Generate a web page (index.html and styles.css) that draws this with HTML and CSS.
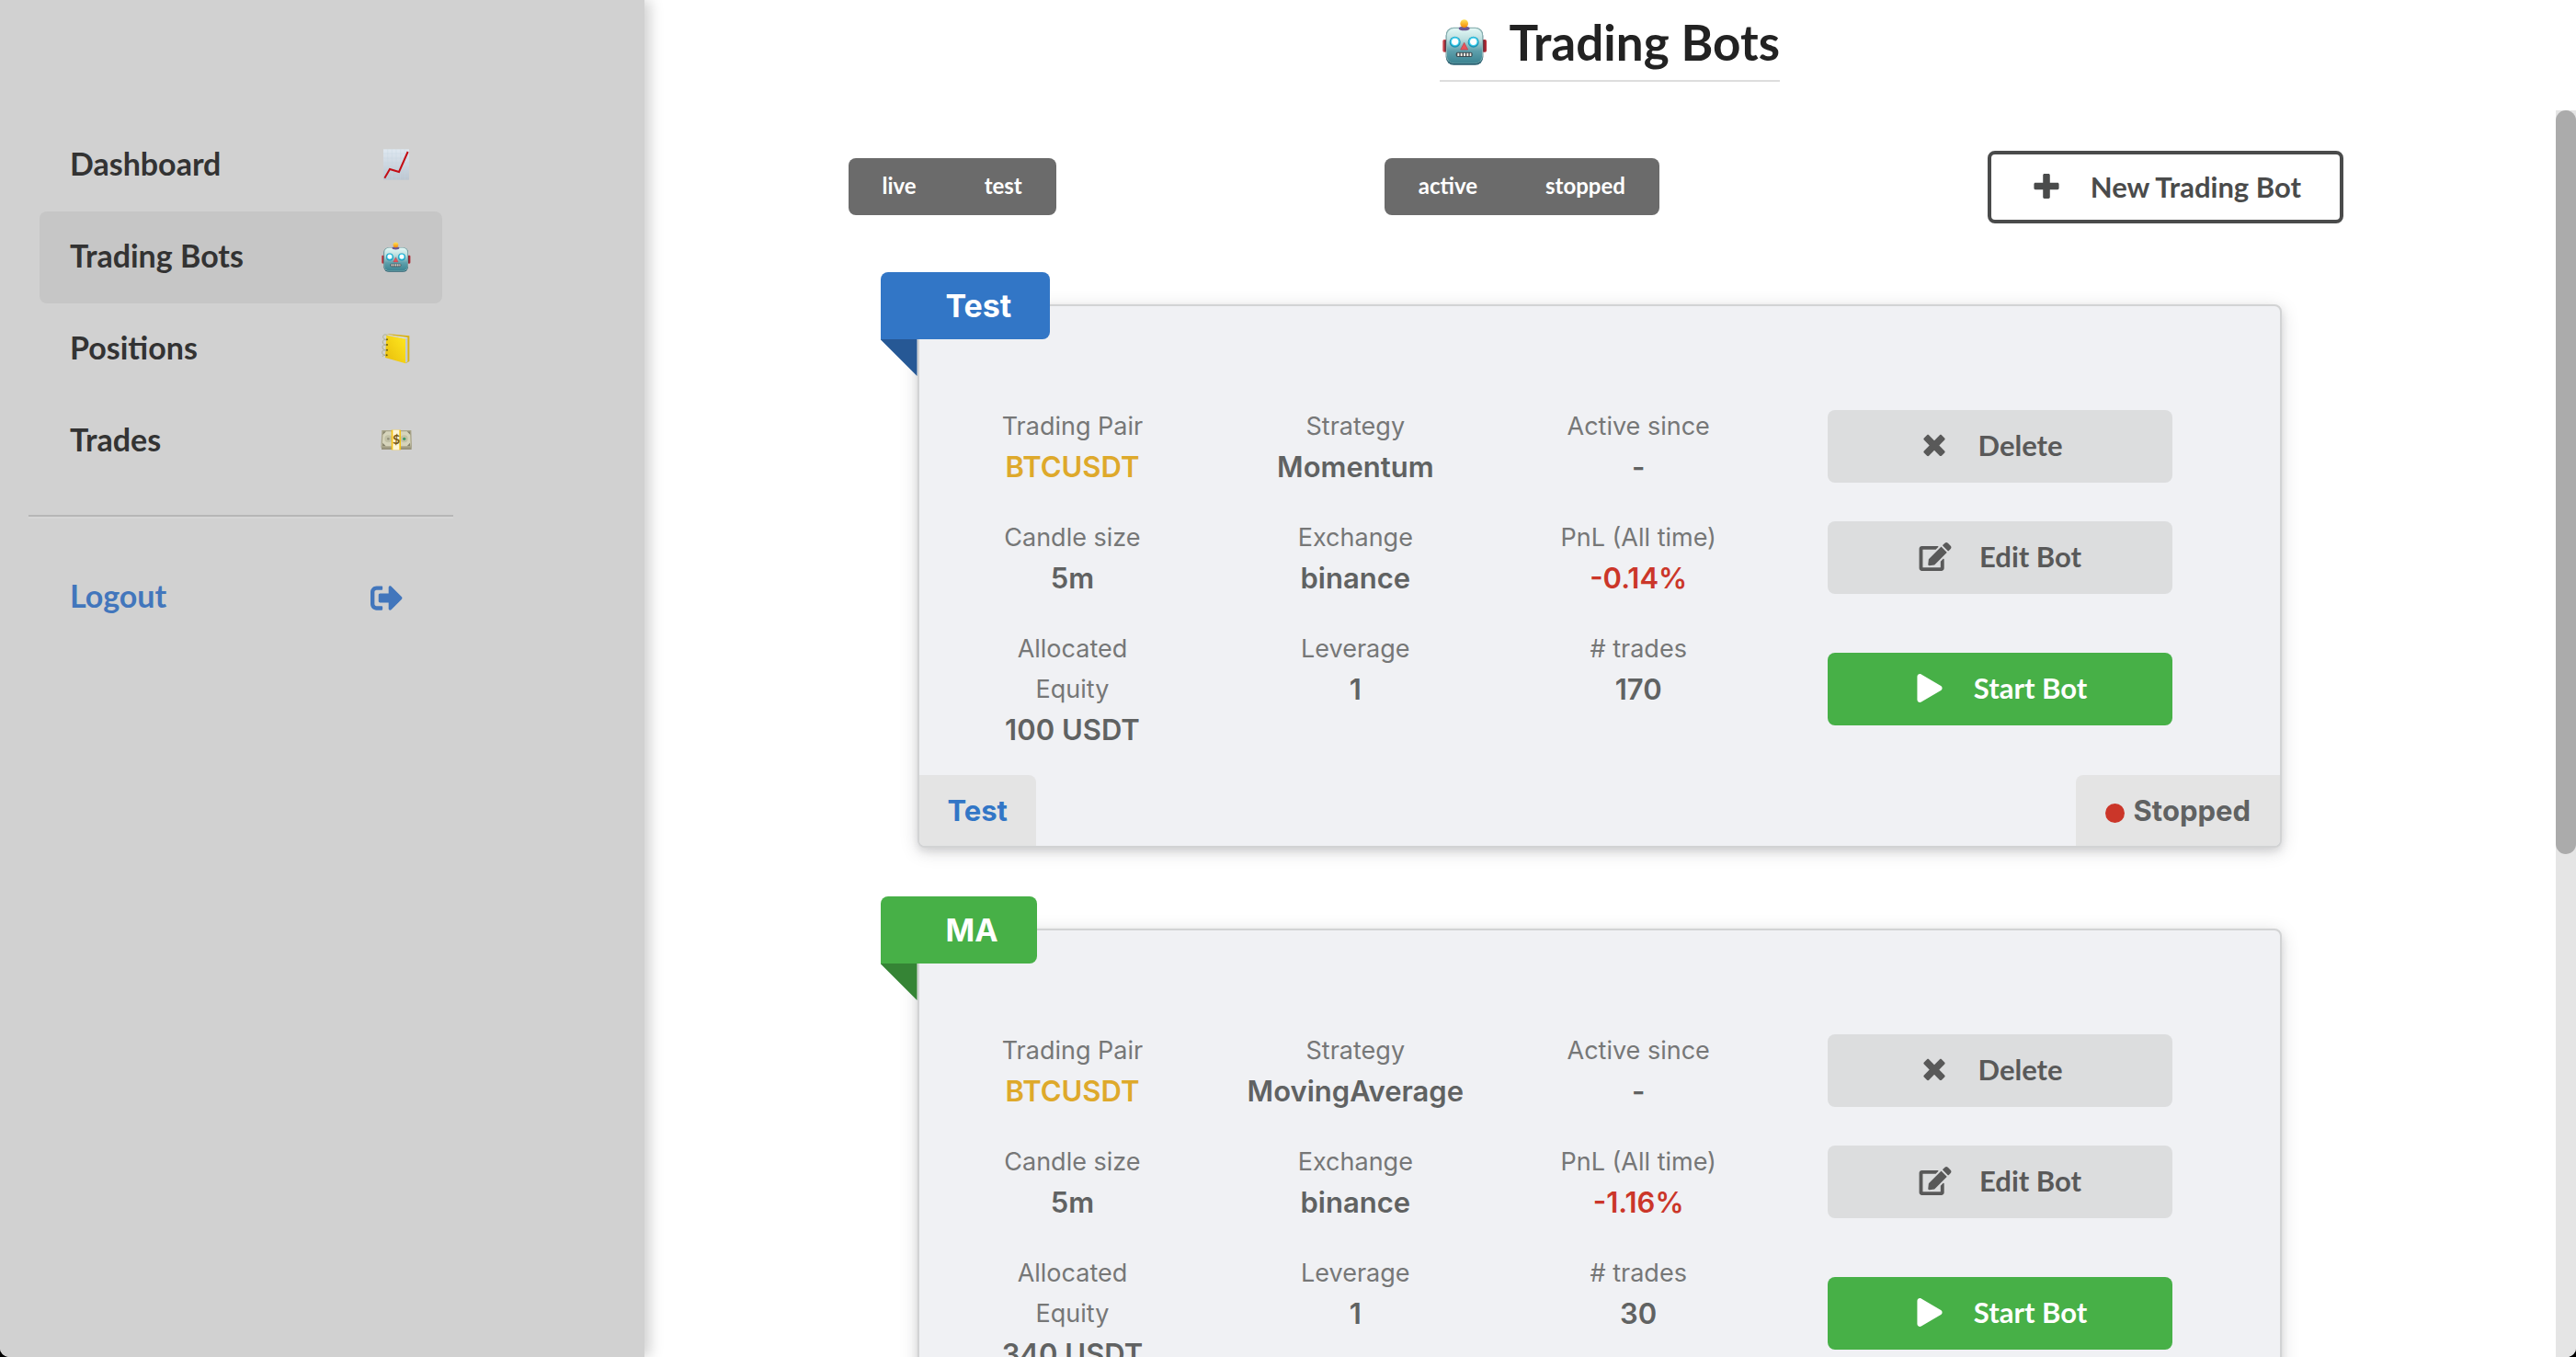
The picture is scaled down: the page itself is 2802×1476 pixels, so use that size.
FILE: index.html
```html
<!DOCTYPE html>
<html lang="en">
<head>
<meta charset="utf-8">
<title>Trading Bots</title>
<link rel="stylesheet" href="styles.css">
</head>
<body>
<svg class="defs" aria-hidden="true">
  <defs>
    <linearGradient id="face" x1="0" y1="0" x2="0" y2="1">
      <stop offset="0" stop-color="#e2f7f5"/><stop offset=".3" stop-color="#bfe0e0"/><stop offset=".65" stop-color="#5d9fab"/><stop offset="1" stop-color="#3b8391"/>
    </linearGradient>
    <linearGradient id="ball" x1="0" y1="0" x2="0" y2="1"><stop offset="0" stop-color="#ffe45a"/><stop offset="1" stop-color="#f58a07"/></linearGradient>
    <linearGradient id="paper" x1="0" y1="0" x2="0" y2="1"><stop offset="0" stop-color="#dfe8f1"/><stop offset="1" stop-color="#bcc6d0"/></linearGradient>
    <linearGradient id="cover" x1="1" y1="0" x2="0" y2="1"><stop offset="0" stop-color="#ffe81f"/><stop offset="1" stop-color="#e8bc0b"/></linearGradient>
    <symbol id="robot" viewBox="195 55 165 165">
      <rect x="205" y="127" width="14" height="41" rx="5" fill="#c9434a"/>
      <rect x="334" y="127" width="14" height="41" rx="5" fill="#b02a35"/>
      <rect x="211" y="130" width="5" height="35" fill="#7f2a35"/>
      <rect x="337" y="130" width="5" height="35" fill="#7f2a35"/>
      <rect x="215" y="88" width="122" height="122" rx="26" fill="#2b6273"/>
      <rect x="216" y="87" width="120" height="118" rx="25" fill="#8fb5b5"/>
      <rect x="219" y="91" width="114" height="113" rx="22" fill="url(#face)"/>
      <ellipse cx="275" cy="91" rx="18" ry="7" fill="#6d5791"/>
      <circle cx="275" cy="75" r="13" fill="url(#ball)"/>
      <circle cx="245" cy="135" r="18" fill="#1c93b5"/>
      <circle cx="245" cy="134" r="15" fill="#3fd0ee"/>
      <circle cx="245" cy="134" r="11" fill="#fff"/>
      <circle cx="305" cy="135" r="18" fill="#1c93b5"/>
      <circle cx="305" cy="134" r="15" fill="#3fd0ee"/>
      <circle cx="305" cy="134" r="11" fill="#fff"/>
      <path d="M275 137l12 23h-24z" fill="#e8535a" stroke="#b8424c" stroke-width="2" stroke-linejoin="round"/>
      <rect x="248" y="168" width="54" height="16" rx="6" fill="#3c4a50"/>
      <path d="M253 171h6v10h-6zM263 171h6v10h-6zM273 171h6v10h-6zM283 171h6v10h-6zM293 171h5v10h-5z" fill="#f4efe6"/>
    </symbol>
    <symbol id="chart" viewBox="0 0 108 108">
      <rect x="12" y="1" width="84" height="100" fill="url(#paper)"/>
      <path d="M26 1v100M40 1v100M54 1v100M68 1v100M82 1v100M12 15h84M12 30h84M12 45h84M12 60h84M12 75h84M12 90h84" stroke="#c3d3e2" stroke-width="1" fill="none"/>
      <path d="M16 95l17-29 30 9L92 9" fill="none" stroke="#c40d14" stroke-width="6"/>
    </symbol>
    <symbol id="notebook" viewBox="0 0 108 108">
      <path d="M22 3l75 7v83l-13 7V20z" fill="#d9b212"/>
      <path d="M30 7l61 8v79l-7 4V20z" fill="#d9dee4"/>
      <path d="M86 18v79M89 17v78" stroke="#8d97a3" stroke-width="1"/>
      <path d="M22 8l62 12v80L18 81z" fill="url(#cover)"/>
      <g fill="none" stroke="#aeb08f" stroke-width="3"><path d="M25 8c-9-5-14-1-14 5s5 10 12 9M24 25c-9-5-14-1-14 5s5 10 12 9M23 42c-9-5-14-1-14 5s5 10 12 9M22 59c-9-5-14-1-14 5s5 10 12 9M22 75c-9-5-12-1-12 3"/></g>
      <g fill="#6b5a12"><circle cx="24" cy="22" r="3"/><circle cx="24" cy="39" r="3"/><circle cx="24" cy="56" r="3"/><circle cx="23" cy="73" r="3"/></g>
    </symbol>
    <symbol id="money" viewBox="0 0 108 108">
      <path d="M6 72h98v9H6z" fill="#98937c"/>
      <path d="M7 18h96l2 56H4z" fill="#a9a58a"/>
      <path d="M11 22h88l2 48H8z" fill="#d6d4bb"/>
      <path d="M11 22h10l-11 11zM99 22H89l11 11zM9 70l1-11 10 11zM100 70l-1-11-10 11z" fill="#85826b"/>
      <circle cx="28" cy="46" r="12" fill="#c2c1a6"/><circle cx="80" cy="46" r="12" fill="#c2c1a6"/>
      <circle cx="28" cy="46" r="4" fill="#94927c"/><circle cx="80" cy="46" r="5" fill="#3f9868"/>
      <path d="M38 17h31v65H38z" fill="#f5c315"/>
      <path d="M43 17h21v65H43z" fill="#fdf5d4"/>
      <text class="bill-sign" x="54" y="63" text-anchor="middle" fill="#7a5a14">$</text>
    </symbol>
    <symbol id="i-plus" viewBox="0 0 448 512"><path d="M448 294.2v-76.4c0-13.3-10.7-24-24-24H286.200V56c0-13.3-10.7-24-24-24h-76.4c-13.3 0-24 10.7-24 24v137.8H24c-13.3 0-24 10.7-24 24v76.4c0 13.300 10.700 24 24 24h137.8V456c0 13.300 10.700 24 24 24h76.400c13.300 0 24-10.7 24-24V318.200H424c13.300 0 24-10.7 24-24z"/></symbol>
    <symbol id="i-delete" viewBox="0 0 384 512"><path d="M323.1 441l53.900-53.900c9.400-9.400 9.400-24.500 0-33.900L279.800 256l97.200-97.200c9.400-9.400 9.400-24.500 0-33.900L323.100 71c-9.400-9.400-24.500-9.400-33.900 0L192 168.200 94.800 71c-9.400-9.400-24.500-9.400-33.900 0L7 124.900c-9.400 9.400-9.400 24.500 0 33.900l97.200 97.200L7 353.200c-9.400 9.400-9.400 24.500 0 33.900L60.900 441c9.400 9.400 24.500 9.400 33.900 0l97.200-97.200 97.200 97.200c9.300 9.300 24.500 9.300 33.900 0z"/></symbol>
    <symbol id="i-edit" viewBox="0 0 576 512"><path d="M402.600 83.200l90.200 90.200c3.800 3.800 3.800 10 0 13.800L274.400 405.600l-92.800 10.300c-12.400 1.400-22.900-9.100-21.500-21.500l10.300-92.800L388.800 83.200c3.800-3.800 10-3.800 13.800 0zm162-22.900l-48.800-48.800c-15.200-15.200-39.900-15.200-55.200 0l-35.400 35.400c-3.800 3.800-3.800 10 0 13.800l90.200 90.200c3.800 3.800 10 3.800 13.800 0l35.400-35.400c15.200-15.300 15.200-40 0-55.200zM384 346.200V448H64V128h229.800c3.200 0 6.200-1.300 8.500-3.500l40-40c7.600-7.600 2.200-20.500-8.500-20.500H48C21.500 64 0 85.500 0 112v352c0 26.500 21.500 48 48 48h352c26.500 0 48-21.500 48-48V306.200c0-10.700-12.900-16-20.500-8.500l-40 40c-2.200 2.300-3.500 5.300-3.500 8.500z"/></symbol>
    <symbol id="i-play" viewBox="0 0 448 512"><path d="M424.400 214.700L72.400 6.600C43.800-10.300 0 6.100 0 47.900V464c0 37.500 40.700 60.100 72.400 41.300l352-208c31.400-18.500 31.500-64.100 0-82.600z"/></symbol>
    <symbol id="i-logout" viewBox="0 0 512 512"><path d="M497 273L329 441c-15 15-41 4.500-41-17v-96H152c-13.300 0-24-10.700-24-24v-96c0-13.300 10.700-24 24-24h136V88c0-21.400 25.900-32 41-17l168 168c9.300 9.400 9.300 24.600 0 34zM192 436v-40c0-6.600-5.400-12-12-12H96c-17.700 0-32-14.300-32-32V160c0-17.700 14.300-32 32-32h84c6.600 0 12-5.400 12-12V76c0-6.600-5.400-12-12-12H96c-53 0-96 43-96 96v192c0 53 43 96 96 96h84c6.600 0 12-5.400 12-12z"/></symbol>
  </defs>
</svg>

<div class="app">
  <aside class="sidebar">
    <nav class="menu">
      <a class="menu-item" href="#dashboard">Dashboard<svg class="emoji"><use href="#chart"/></svg></a>
      <a class="menu-item active" href="#bots" aria-current="page">Trading Bots<svg class="emoji"><use href="#robot"/></svg></a>
      <a class="menu-item" href="#positions">Positions<svg class="emoji"><use href="#notebook"/></svg></a>
      <a class="menu-item" href="#trades">Trades<svg class="emoji"><use href="#money"/></svg></a>
      <hr class="menu-divider">
      <a class="menu-item logout" href="#logout">Logout<svg class="menu-icon"><use href="#i-logout"/></svg></a>
    </nav>
  </aside>

  <div class="page">
    <header class="page-header">
      <h1 class="title"><svg class="title-emoji"><use href="#robot"/></svg>Trading Bots</h1>
    </header>
    <div class="viewport">
      <main class="content">
        <div class="toolbar">
          <div class="filter" role="group" aria-label="Mode">
            <button class="filter-option" type="button">live</button>
            <button class="filter-option" type="button">test</button>
          </div>
          <div class="filter" role="group" aria-label="State">
            <button class="filter-option" type="button">active</button>
            <button class="filter-option" type="button">stopped</button>
          </div>
          <button class="btn btn-outline" type="button"><svg class="icon"><use href="#i-plus"/></svg>New Trading Bot</button>
        </div>

        <article class="card">
          <h2 class="ribbon blue">Test</h2>
          <div class="card-body">
            <div class="row">
              <dl class="fact"><dt>Trading Pair</dt><dd class="gold">BTCUSDT</dd></dl>
              <dl class="fact"><dt>Strategy</dt><dd>Momentum</dd></dl>
              <dl class="fact"><dt>Active since</dt><dd>-</dd></dl>
              <button class="btn btn-delete" type="button"><svg class="icon"><use href="#i-delete"/></svg>Delete</button>
            </div>
            <div class="row">
              <dl class="fact"><dt>Candle size</dt><dd>5m</dd></dl>
              <dl class="fact"><dt>Exchange</dt><dd>binance</dd></dl>
              <dl class="fact"><dt>PnL (All time)</dt><dd class="red">-0.14%</dd></dl>
              <button class="btn" type="button"><svg class="icon"><use href="#i-edit"/></svg>Edit Bot</button>
            </div>
            <div class="row">
              <dl class="fact"><dt>Allocated Equity</dt><dd>100 USDT</dd></dl>
              <dl class="fact"><dt>Leverage</dt><dd>1</dd></dl>
              <dl class="fact"><dt># trades</dt><dd>170</dd></dl>
              <button class="btn btn-start" type="button"><svg class="icon"><use href="#i-play"/></svg>Start Bot</button>
            </div>
          </div>
          <footer class="card-footer">
            <span class="tag tag-left">Test</span>
            <span class="tag tag-right"><span class="dot"></span>Stopped</span>
          </footer>
        </article>

        <article class="card">
          <h2 class="ribbon green">MA</h2>
          <div class="card-body">
            <div class="row">
              <dl class="fact"><dt>Trading Pair</dt><dd class="gold">BTCUSDT</dd></dl>
              <dl class="fact"><dt>Strategy</dt><dd>MovingAverage</dd></dl>
              <dl class="fact"><dt>Active since</dt><dd>-</dd></dl>
              <button class="btn btn-delete" type="button"><svg class="icon"><use href="#i-delete"/></svg>Delete</button>
            </div>
            <div class="row">
              <dl class="fact"><dt>Candle size</dt><dd>5m</dd></dl>
              <dl class="fact"><dt>Exchange</dt><dd>binance</dd></dl>
              <dl class="fact"><dt>PnL (All time)</dt><dd class="red">-1.16%</dd></dl>
              <button class="btn" type="button"><svg class="icon"><use href="#i-edit"/></svg>Edit Bot</button>
            </div>
            <div class="row">
              <dl class="fact"><dt>Allocated Equity</dt><dd>340 USDT</dd></dl>
              <dl class="fact"><dt>Leverage</dt><dd>1</dd></dl>
              <dl class="fact"><dt># trades</dt><dd>30</dd></dl>
              <button class="btn btn-start" type="button"><svg class="icon"><use href="#i-play"/></svg>Start Bot</button>
            </div>
          </div>
        </article>
      </main>
      <div class="scrollbar" aria-hidden="true"><div class="thumb"></div></div>
    </div>
  </div>
</div>
</body>
</html>
```

FILE: styles.css
```css
*, *::before, *::after { box-sizing: border-box; }

html { background: #000; }

body {
  margin: 0;
  font-family: Inter, "Liberation Sans", sans-serif;
  color: #606262;
}

.defs { position: absolute; width: 0; height: 0; }
.bill-sign { font: 700 42px Lato, sans-serif; }

button { font: inherit; border: 0; margin: 0; cursor: pointer; }

.app {
  display: flex;
  height: 100vh;
  overflow: hidden;
  background: #fff;
  border-radius: 0 0 10px 10px;
}

/* Sidebar */
.sidebar {
  flex: 0 0 25%;
  padding: 130px 31px 0;
  background: #d1d1d1;
  box-shadow: 6px 0 14px #d1d1d1;
}

.menu { max-width: 462px; }

.menu-item {
  display: flex;
  align-items: center;
  justify-content: space-between;
  height: 100px;
  margin: 0 12px;
  padding: 0 32px 4px 33px;
  border-radius: 8px;
  font: 700 34px/42px Lato, sans-serif;
  color: #333;
  text-decoration: none;
}

.menu-item.active { background: #c6c6c6; }
.menu-item.logout { padding-right: 43px; color: #4276bc; }
.emoji { width: 36px; height: 36px; margin-top: 4px; }
.menu-icon { width: 35px; height: 35px; margin-top: 4px; fill: currentColor; }

.menu-divider {
  height: 4px;
  margin: 30px 0 36px;
  border: 0;
  border-top: 2px solid #b6b6b6;
  border-bottom: 2px solid #d6d6d6;
}

/* Page */
.page { flex: 1; min-width: 0; display: flex; flex-direction: column; }

.page-header {
  flex: 0 0 120px;
  display: flex;
  justify-content: center;
  align-items: flex-start;
  padding-top: 14px;
}

.title {
  display: flex;
  align-items: center;
  gap: 20px;
  margin: 0;
  padding-bottom: 9px;
  border-bottom: 2px solid #ddd;
  font: 700 53px/64px Lato, sans-serif;
  color: #222;
}

.title-emoji { width: 55px; height: 55px; }

.viewport { flex: 1; min-height: 0; display: flex; }

.content {
  flex: 1;
  min-width: 0;
  overflow: hidden;
  padding-top: 44px;
}

.scrollbar { flex: 0 0 22px; background: #e5e5e5; }
.thumb { height: calc(60% - 5px); border-radius: 11px; background: #ababab; }

/* Toolbar */
.toolbar {
  display: flex;
  align-items: center;
  justify-content: space-between;
  padding: 0 231px 0 222px;
}

.filter { display: flex; margin-bottom: 2px; border-radius: 8px; background: #6b6b6b; }

.filter-option {
  height: 62px;
  padding: 0 37px 2px;
  background: transparent;
  font: 700 24px/30px Lato, sans-serif;
  color: #fff;
}

/* Buttons */
.btn {
  display: flex;
  align-items: center;
  justify-content: center;
  gap: 30px;
  height: 79px;
  padding: 0 0 2px;
  border-radius: 8px;
  background: #dcddde;
  font: 700 31px/38px Lato, sans-serif;
  color: #595959;
}

.icon { width: 36px; height: 31px; fill: currentColor; }
.btn-delete { padding-right: 22px; }
.btn-start { background: #47b047; color: #fff; }

.btn-outline {
  padding: 0 42px 2px;
  border: 4px solid #4a4b4b;
  background: #fff;
  color: #4a4b4b;
}

/* Bot cards */
.card {
  position: relative;
  margin: 88px 298px 0 297px;
  border: 2px solid #d2d3d4;
  border-radius: 8px;
  background: #f0f1f4;
  box-shadow: 0 4px 8px rgba(34, 36, 38, .12), 0 4px 20px rgba(34, 36, 38, .15);
}

.ribbon {
  position: absolute;
  top: -37px;
  left: -42px;
  margin: 0;
  padding: 0 42px 0 71px;
  border-radius: 8px 8px 8px 0;
  font-size: 34px;
  font-weight: 700;
  line-height: 73px;
  color: #fff;
}

.ribbon::after {
  content: "";
  position: absolute;
  top: 100%;
  left: 0;
  width: 40px;
  height: 40px;
  background: inherit;
  filter: brightness(.75);
  clip-path: polygon(0 0, 100% 0, 100% 100%);
}

.blue { background: #3276c6; }
.green { background: #47b047; }

.card-body {
  display: grid;
  gap: 31px;
  padding: 107px 65px 27px 13px;
}

.row {
  display: grid;
  grid-template-columns: minmax(0, 308fr) minmax(0, 308fr) minmax(0, 308fr) minmax(0, 479fr);
  align-items: start;
}

.row .btn { align-self: center; margin: 0 52px; }

.fact {
  margin: 0;
  padding: 2px 54px 0;
  text-align: center;
  line-height: 44px;
}

.fact dt { font-size: 27px; color: #767777; }

.fact dd {
  display: flex;
  justify-content: center;
  margin: 0;
  font-size: 31px;
  font-weight: 600;
}

.gold { color: #dea92b; }
.red { color: #cb3629; }

.card-footer { display: flex; justify-content: space-between; }

.tag {
  display: flex;
  align-items: center;
  gap: 10px;
  height: 77px;
  padding: 0 32px;
  background: #e4e4e4;
  font-size: 31px;
  font-weight: 700;
}

.tag-left { padding: 0 31px; border-radius: 0 8px 0 6px; color: #3276c6; }
.tag-right { border-radius: 8px 0 6px 0; }

.dot {
  width: 21px;
  height: 21px;
  margin-top: 6px;
  border-radius: 50%;
  background: #cb3629;
}
```
